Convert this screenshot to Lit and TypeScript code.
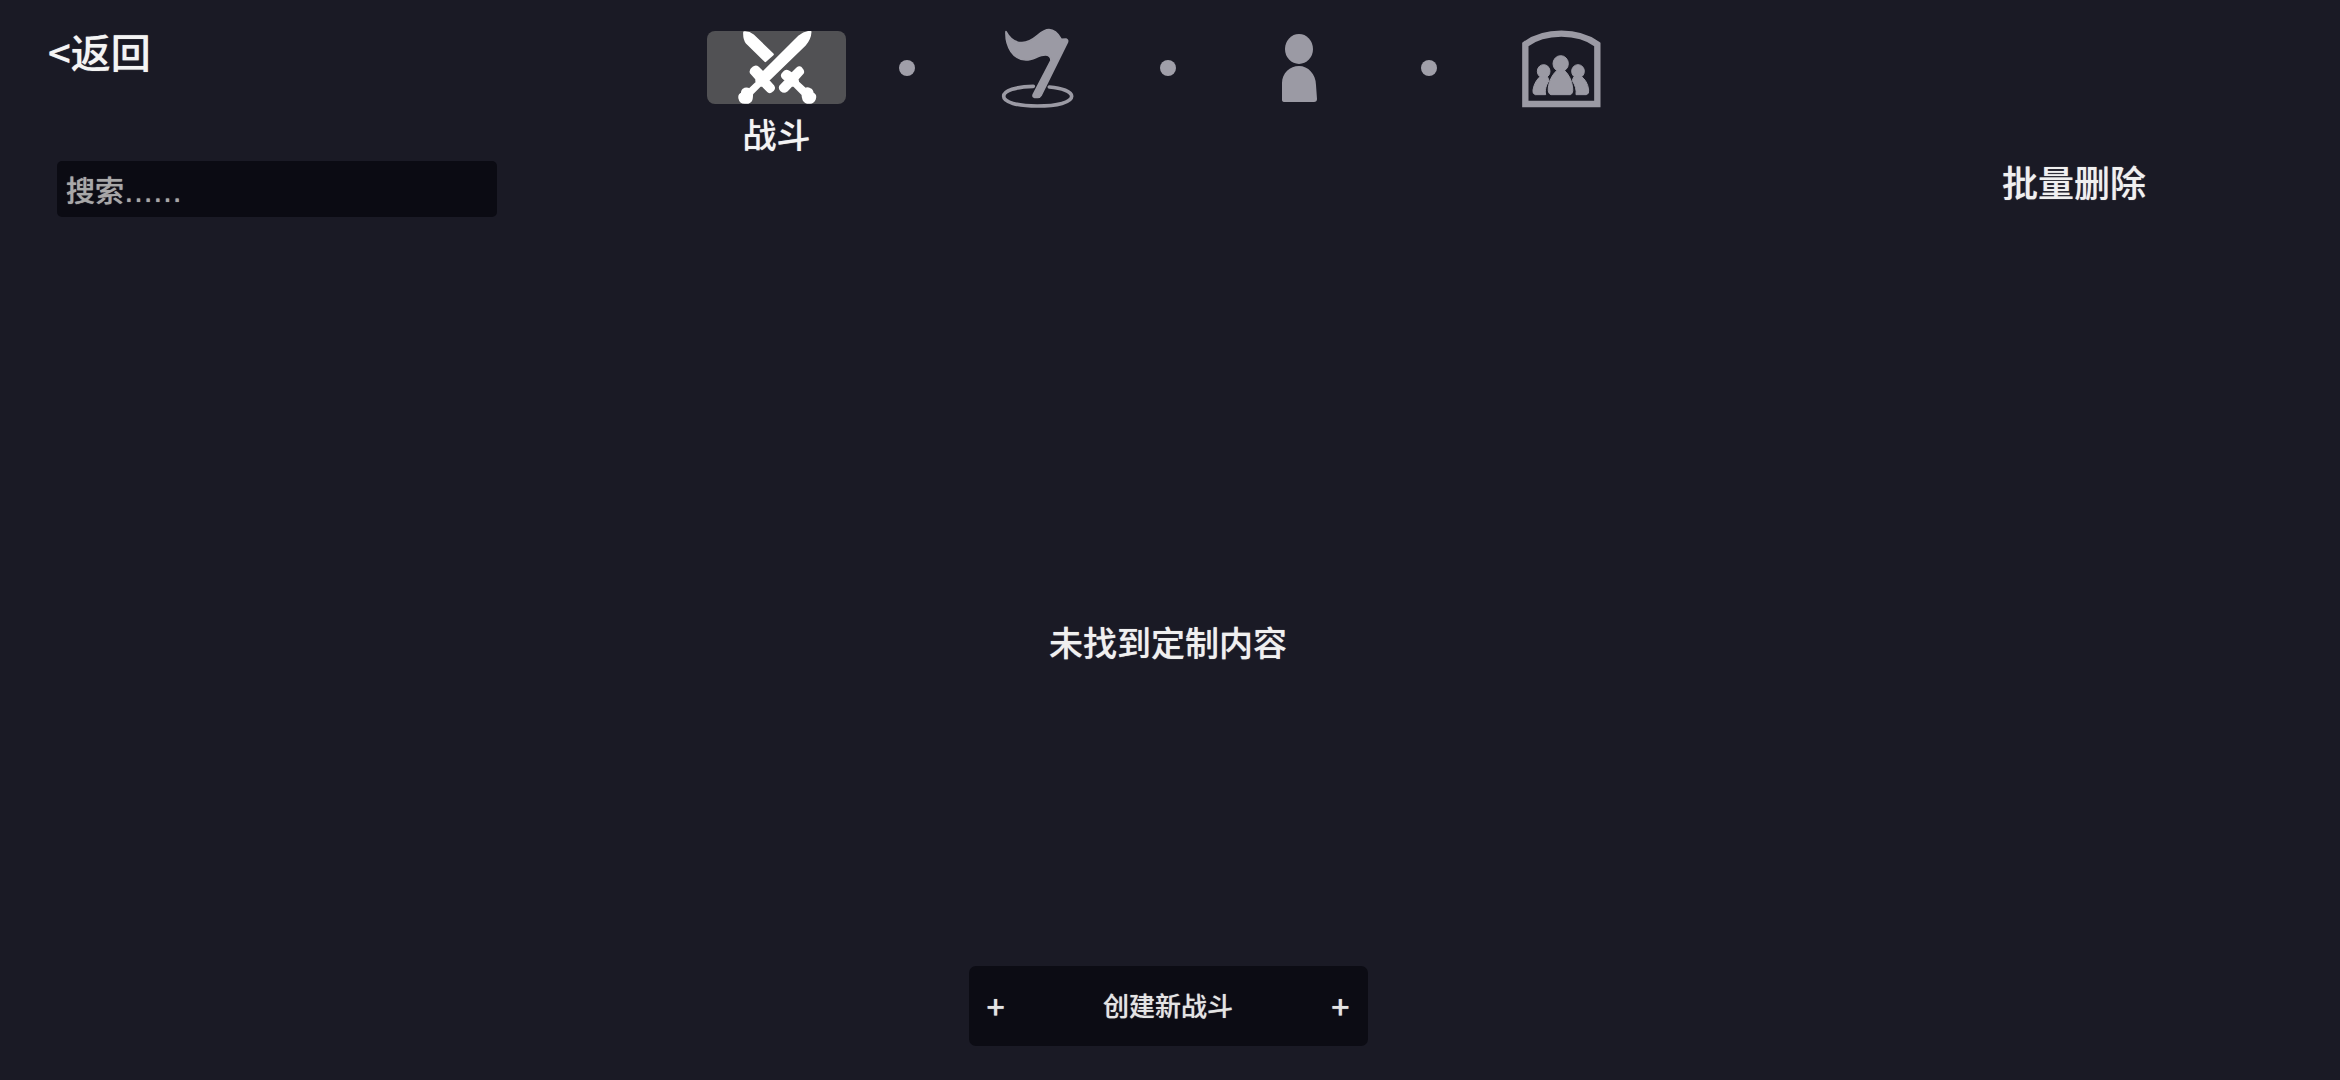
import { LitElement, html, svg, css } from "lit";
import { customElement, property, state } from "lit/decorators.js";

interface Category {
  id: string;
  label: string;
  icon: unknown;
}

const swords = svg`
  <g fill="currentColor" stroke="currentColor" stroke-width="7" stroke-linejoin="round">
    <path d="M41 22 Q55 21 67 31 L126 88 L104 108 L49 54 Q40 42 41 22Z" />
    <path d="M239 21 Q222 21 206 34 L97 143 L82 128 Q75 122 67 129 Q58 136 61 143 L77 161 L78 173 L56 194 Q50 190 42 192 Q34 195 34 206 Q24 210 27 221 Q29 233 42 233 L52 233 Q62 230 63 219 L64 206 L88 182 L96 182 L113 199 Q119 204 126 196 Q132 190 128 184 L112 166 L222 60 Q238 42 239 21Z" />
    <path d="M157 158 Q150 150 160 142 Q166 135 172 139 L184 146 L200 130 Q207 124 213 132 Q219 138 216 144 L200 162 L202 172 L224 192 Q230 189 237 192 Q245 195 246 206 Q256 210 252 222 Q248 232 238 233 Q224 234 219 224 Q216 215 216 208 L190 182 L182 182 L168 197 Q160 203 152 196 Q146 190 149 184 L166 166Z" />
  </g>`;

const flag = svg`
  <path fill="currentColor" stroke="currentColor" stroke-width="5" stroke-linejoin="round" d="M78 63 C87 80 100 96 126 96 C165 96 178 57 207 57 C226 57 236 72 244 86 L258 85 Q265 88 262 95 L184 253 Q180 260 173 260 L163 260 Q157 258 160 251 L213 149 Q212 133 196 133 C176 133 160 148 138 148 C100 148 76 108 78 63Z" />
  <path fill="none" stroke="currentColor" stroke-width="11" stroke-linecap="round" d="M160 227 C108 228 71 240 71 257 C71 275 112 286 172 286 C232 286 275 275 275 257 C275 243 246 232 208 229" />`;

const person = svg`
  <g fill="currentColor">
    <ellipse cx="39" cy="28" rx="14" ry="15" />
    <path d="M22 62 C22 52 30 45 39 45 C48 45 56 53 56 64 L57 78 Q57 81 54 81 L25 81 Q22 81 22 79Z" />
  </g>`;

const hall = svg`
  <path fill="none" stroke="currentColor" stroke-width="19" d="M76 280 L76 101 Q120 69 184 69 Q248 69 292 101 L292 280Z" />
  <g fill="currentColor" stroke="currentColor" stroke-width="3" stroke-linejoin="round">
    <ellipse cx="131" cy="182" rx="19" ry="20" />
    <path d="M106 252 Q97 250 99 238 C102 219 111 206 120 198 L142 198 Q146 204 147 210 C138 224 134 238 137 252Z" />
    <ellipse cx="234" cy="182" rx="19" ry="20" />
    <path d="M228 252 C230 238 226 224 217 210 Q218 204 222 198 L245 198 C255 206 264 219 266 238 Q268 250 259 252Z" />
    <ellipse cx="182" cy="159" rx="23" ry="24" />
    <path d="M153 252 Q143 249 145 232 C147 210 157 192 170 180 L194 180 C207 192 216 210 218 232 Q220 249 211 252Z" />
  </g>`;

const categories: Category[] = [
  { id: "battle", label: "战斗", icon: html`<svg class="glyph" viewBox="4 18 270 219" width="90" height="73" aria-hidden="true">${swords}</svg>` },
  { id: "campaign", label: "战役", icon: html`<svg class="glyph" viewBox="60 31 228 282" width="76" height="94" aria-hidden="true">${flag}</svg>` },
  { id: "unit", label: "单位", icon: html`<svg class="glyph" viewBox="0 0 78 94" width="78" height="94" aria-hidden="true">${person}</svg>` },
  { id: "faction", label: "派系", icon: html`<svg class="glyph" viewBox="54 31 252 282" width="84" height="94" aria-hidden="true">${hall}</svg>` },
];

@customElement("category-nav")
class CategoryNav extends LitElement {
  @property() selected = "battle";

  static styles = css`
    :host {
      display: block;
    }
    .list {
      display: flex;
      justify-content: center;
      margin: 0;
      padding: 0;
      list-style: none;
    }
    .item {
      display: flex;
      align-items: flex-start;
    }
    .item + .item::before {
      content: "";
      width: 16px;
      height: 16px;
      margin: 29px 53px;
      border-radius: 50%;
      background: #a09fa9;
    }
    .tab {
      display: flex;
      flex-direction: column;
      align-items: center;
      width: 139px;
      padding: 0;
      border: 0;
      background: none;
      color: #9b9aa4;
      font: inherit;
      text-shadow: inherit;
      cursor: pointer;
    }
    .badge {
      display: flex;
      align-items: center;
      justify-content: center;
      width: 100%;
      height: 73px;
      border-radius: 8px;
    }
    .glyph {
      flex: none;
      display: block;
    }
    .active .badge {
      background: #515154;
      color: #fff;
    }
    .name {
      color: #f4f4f4;
      font-size: 34px;
      line-height: 40px;
      margin-top: 10px;
    }
  `;

  private pick(id: string) {
    this.dispatchEvent(new CustomEvent("pick", { detail: id }));
  }

  render() {
    return html`<nav>
      <ul class="list">
        ${categories.map((c) => {
          const on = c.id === this.selected;
          return html`<li class="item">
            <button
              type="button"
              class="tab ${on ? "active" : ""}"
              aria-label=${c.label}
              aria-pressed=${on}
              @click=${() => this.pick(c.id)}
            >
              <span class="badge">${c.icon}</span>
              ${on ? html`<span class="name">${c.label}</span>` : ""}
            </button>
          </li>`;
        })}
      </ul>
    </nav>`;
  }
}

@customElement("app-root")
class AppRoot extends LitElement {
  @state() private selected = "battle";

  static styles = css`
    :host {
      display: flex;
      flex-direction: column;
      box-sizing: border-box;
      min-height: 100vh;
      padding: 31px 4px 34px 0;
      background: #1a1a25;
      color: #f0f0f0;
      font-family: "Noto Sans CJK SC", sans-serif;
      font-weight: 500;
      text-shadow: 0 0 1px #ffffff90;
    }
    .top {
      display: grid;
      grid-template-columns: 1fr auto 1fr;
      align-items: start;
      min-height: 130px;
    }
    .back {
      padding-left: 48px;
      color: #f4f4f4;
      font-size: 40px;
      line-height: 40px;
      text-decoration: none;
    }
    .tools {
      display: flex;
      align-items: flex-start;
      justify-content: space-between;
      padding: 0 190px 0 57px;
    }
    .search {
      box-sizing: border-box;
      width: 440px;
      height: 56px;
      padding: 5px 9px 0;
      border: 0;
      border-radius: 5px;
      background: #0b0b13;
      color: #f0f0f0;
      font-family: "DejaVu Sans", "Noto Sans CJK SC", sans-serif;
      font-size: 29px;
      font-weight: 500;
      text-shadow: inherit;
    }
    .search::placeholder {
      color: #a8a8a8;
      opacity: 1;
    }
    .bulk {
      padding: 0;
      border: 0;
      background: none;
      color: inherit;
      font: inherit;
      font-size: 36px;
      line-height: 40px;
      text-shadow: inherit;
    }
    .content {
      flex: 1;
      display: flex;
      justify-content: center;
      padding-top: 405px;
    }
    .empty {
      margin: 0;
      font-size: 34px;
      line-height: 40px;
    }
    .create {
      align-self: center;
      display: flex;
      align-items: center;
      justify-content: space-between;
      box-sizing: border-box;
      width: 399px;
      height: 80px;
      padding: 0 18px 3px;
      border: 0;
      border-radius: 7px;
      background: #0c0c14;
      color: #e4e4e4;
      font: inherit;
      font-size: 26px;
      text-shadow: inherit;
    }
    .plus {
      font-size: 32px;
    }
  `;

  render() {
    return html`
      <header class="top">
        <a class="back" href="#">&lt;返回</a>
        <category-nav
          .selected=${this.selected}
          @pick=${(e: CustomEvent<string>) => (this.selected = e.detail)}
        ></category-nav>
      </header>
      <section class="tools">
        <input class="search" type="search" placeholder="搜索……" aria-label="搜索" />
        <button class="bulk" type="button">批量删除</button>
      </section>
      <main class="content"><p class="empty">未找到定制内容</p></main>
      <button class="create" type="button">
        <span class="plus">+</span><span>创建新战斗</span><span class="plus">+</span>
      </button>
    `;
  }
}
